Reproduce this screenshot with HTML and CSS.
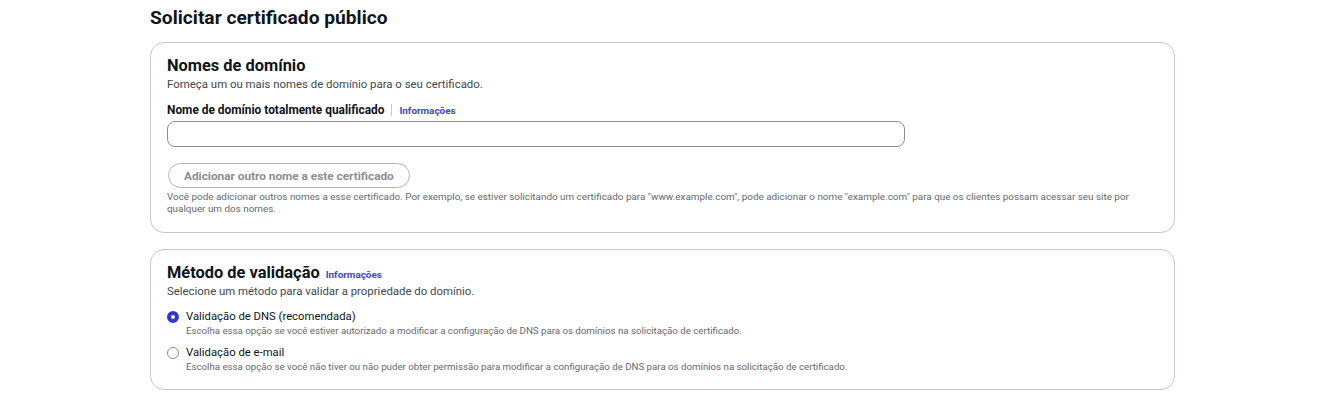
FILE: index.html
```html
<!DOCTYPE html>
<html lang="pt-BR">
<head>
<meta charset="utf-8">
<title>Solicitar certificado público</title>
<link rel="stylesheet" href="styles.css">
</head>
<body>
<main class="page">
  <h1 class="page-title">Solicitar certificado público</h1>

  <section class="card">
    <h2 class="card-title">Nomes de domínio</h2>
    <p class="card-desc">Forneça um ou mais nomes de domínio para o seu certificado.</p>

    <div class="field">
      <div class="label-row">
        <span class="label">Nome de domínio totalmente qualificado</span>
        <span class="sep"></span>
        <a class="info-link" href="#">Informações</a>
      </div>
      <input class="text-input" type="text">
    </div>

    <button class="btn-disabled" type="button">Adicionar outro nome a este certificado</button>
    <p class="help">Você pode adicionar outros nomes a esse certificado. Por exemplo, se estiver solicitando um certificado para "www.example.com", pode adicionar o nome "example.com" para que os clientes possam acessar seu site por qualquer um dos nomes.</p>
  </section>

  <section class="card card-validation">
    <div class="title-row">
      <h2 class="card-title">Método de validação</h2>
      <a class="info-link" href="#">Informações</a>
    </div>
    <p class="card-desc">Selecione um método para validar a propriedade do domínio.</p>

    <div class="radio-group">
      <div class="radio-item">
        <span class="radio radio-checked"></span>
        <div class="radio-text">
          <div class="radio-label">Validação de DNS (recomendada)</div>
          <div class="radio-desc">Escolha essa opção se você estiver autorizado a modificar a configuração de DNS para os domínios na solicitação de certificado.</div>
        </div>
      </div>
      <div class="radio-item">
        <span class="radio"></span>
        <div class="radio-text">
          <div class="radio-label">Validação de e-mail</div>
          <div class="radio-desc">Escolha essa opção se você não tiver ou não puder obter permissão para modificar a configuração de DNS para os domínios na solicitação de certificado.</div>
        </div>
      </div>
    </div>
  </section>
</main>
</body>
</html>
```

FILE: styles.css
```css
* { box-sizing: border-box; }

body {
  margin: 0;
  background: #ffffff;
  font-family: Roboto, "Open Sans", "Liberation Sans", sans-serif;
  color: #0f141a;
}

.page {
  width: 1025px;
  margin-left: 150px;
  padding-top: 5px;
}

.page-title {
  margin: 0 0 12px 0;
  font-size: 19.2px;
  line-height: 25px;
  font-weight: 700;
  color: #0f141a;
}

.card {
  border: 1px solid #c6c6cd;
  border-radius: 14px;
  padding: 12px 16px 17px 16px;
  margin-bottom: 16px;
}

.card-title {
  margin: 0;
  font-size: 16.4px;
  line-height: 22px;
  font-weight: 700;
}

.card-desc {
  margin: 0;
  font-size: 11.4px;
  line-height: 15px;
  color: #424650;
}

.field { margin-top: 10px; }

.label-row {
  display: flex;
  align-items: center;
  height: 16px;
}

.label {
  font-size: 11.9px;
  font-weight: 700;
}

.sep {
  width: 1px;
  height: 12px;
  background: #c6c6cd;
  margin: 0 7px;
}

.info-link {
  font-size: 9.9px;
  font-weight: 700;
  color: #3d45e0;
  text-decoration: none;
}

.text-input {
  display: block;
  margin-top: 3px;
  width: 738px;
  height: 26px;
  border: 1px solid #8c8c94;
  border-radius: 8px;
  background: #fff;
}

.btn-disabled {
  display: block;
  margin-top: 16px;
  margin-left: 1px;
  height: 25px;
  padding: 0 15px;
  border: 1px solid #b4b4bb;
  border-radius: 20px;
  background: #fff;
  color: #8c8c94;
  font-family: inherit;
  font-size: 11.8px;
  font-weight: 700;
}

.help {
  margin: 3px 0 0 0;
  font-size: 9.9px;
  line-height: 12px;
  color: #656871;
}

.card-validation { padding-bottom: 16px; }

.title-row {
  display: flex;
  align-items: baseline;
  gap: 6px;
}

.radio-group {
  margin-top: 10px;
  display: flex;
  flex-direction: column;
  gap: 8px;
}

.radio-item {
  display: flex;
  align-items: flex-start;
  gap: 7px;
}

.radio {
  flex: none;
  width: 12px;
  height: 12px;
  margin-top: 2px;
  border: 1.5px solid #8c8c94;
  border-radius: 50%;
  background: #fff;
}

.radio-checked {
  border: 4px solid #2f38d6;
}

.radio-label {
  font-size: 11.3px;
  line-height: 15px;
  color: #0f141a;
}

.radio-desc {
  font-size: 9.7px;
  line-height: 13px;
  color: #656871;
}
```
